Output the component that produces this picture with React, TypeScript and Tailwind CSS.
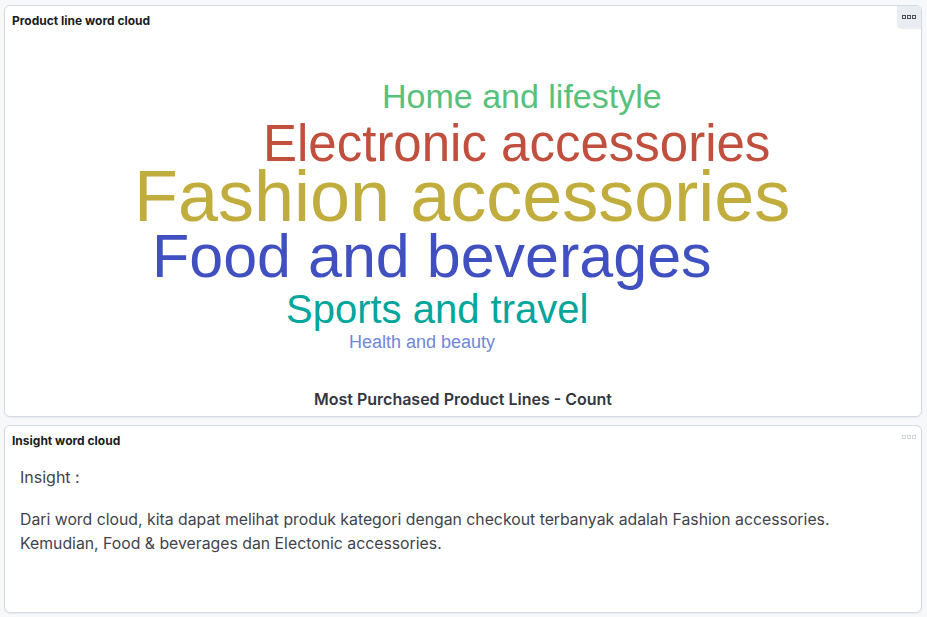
import React from 'react';

interface CloudWord {
    text: string;
    size: number;
    color: string;
    left: number;
    top: number;
}

// word positions are the content of the cloud, so they sit on a free canvas
const words: CloudWord[] = [
    { text: 'Home and lifestyle', size: 34, color: '#57c17b', left: 377, top: 43 },
    { text: 'Electronic accessories', size: 51, color: '#c04f3e', left: 258, top: 82 },
    { text: 'Fashion accessories', size: 72, color: '#c1ad3e', left: 129, top: 124 },
    { text: 'Food and beverages', size: 61, color: '#4050c0', left: 147, top: 190 },
    { text: 'Sports and travel', size: 40, color: '#00a69b', left: 281, top: 253 },
    { text: 'Health and beauty', size: 18, color: '#6f87d8', left: 344, top: 297 },
];

function PanelMenu({ faded }: { faded?: boolean }) {
    return (
        <div
            className={`absolute right-0 top-0 w-[24px] h-[23px] flex items-center justify-center rounded-tr-[5px] rounded-bl-[5px] ${faded ? '' : 'bg-[#e9ecf1]'}`}
        >
            <svg width="14" height="6" viewBox="0 0 14 6" className={faded ? 'text-[#d3d6dc]' : 'text-[#4a4f5a]'}>
                <rect x="0.5" y="0.5" width="3" height="3" fill="none" stroke="currentColor" />
                <rect x="5.5" y="0.5" width="3" height="3" fill="none" stroke="currentColor" />
                <rect x="10.5" y="0.5" width="3" height="3" fill="none" stroke="currentColor" />
            </svg>
        </div>
    );
}

function PanelTitle({ children }: { children: React.ReactNode }) {
    return (
        <div className="h-[30px] flex items-center px-[7px] text-[12px] font-bold text-[#1a1c21] font-['Inter',sans-serif]">
            {children}
        </div>
    );
}

export default function App() {
    return (
        <div className="w-[927px] h-[617px] bg-[#f7f8fa] pl-[4px] pr-[5px] pt-[5px] flex flex-col gap-[8px] font-['Inter',sans-serif]">
            {/* Word cloud panel */}
            <div className="relative h-[412px] bg-white border border-[#d3dae6] rounded-[6px] shadow-[0_1px_2px_rgba(0,0,0,0.06)] flex flex-col">
                <PanelMenu />
                <PanelTitle>Product line word cloud</PanelTitle>
                <div className="relative h-[342px] font-['Liberation_Sans',Arial,sans-serif]">
                    {words.map((w) => (
                        <span
                            key={w.text}
                            className="absolute leading-none whitespace-nowrap"
                            style={{ left: w.left, top: w.top, fontSize: w.size, color: w.color }}
                        >
                            {w.text}
                        </span>
                    ))}
                </div>
                <div className="pt-[11px] text-center text-[16px] leading-[20px] font-semibold text-[#343741]">
                    Most Purchased Product Lines - Count
                </div>
            </div>

            {/* Insight panel */}
            <div className="relative h-[188px] bg-white border border-[#d3dae6] rounded-[6px] shadow-[0_1px_2px_rgba(0,0,0,0.06)] flex flex-col">
                <PanelMenu faded />
                <PanelTitle>Insight word cloud</PanelTitle>
                <div className="px-[15px] pt-[9px] text-[#3f434d]">
                    <p className="text-[16px] leading-[24px]">Insight :</p>
                    <p className="mt-[19px] text-[15.8px] leading-[24px]">
                        Dari word cloud, kita dapat melihat produk kategori dengan checkout terbanyak adalah Fashion accessories.
                        <br />
                        Kemudian, Food &amp; beverages dan Electonic accessories.
                    </p>
                </div>
            </div>
        </div>
    );
}
